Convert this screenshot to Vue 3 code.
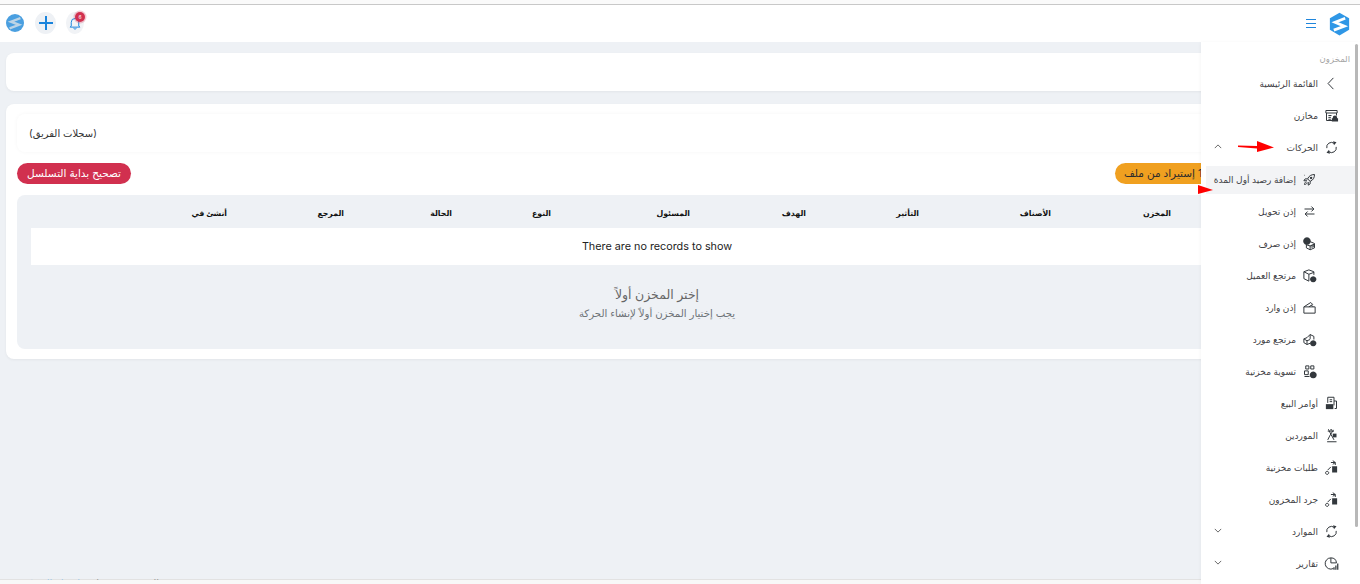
<script setup>
// أيقونات القائمة: line = خطوط، solid = أجزاء معبأة
const icons = {
  back: { line: ['M15 3 6.500 12 15 21'] },
  store: {
    line: ['M3 4h18v4H3z', 'M4 8v12h9', 'M20 8v4', 'M7 12h5M7 15h4M7 18h4'],
    solid: ['M14 15.500a3.500 3.500 0 0 1 7 0v1h1.500v5H12.500v-5H14z']
  },
  sync: {
    line: ['M4.500 13A7.500 7.500 0 0 1 16.500 5.500', 'M19.500 11A7.500 7.500 0 0 1 7.500 18.500'],
    solid: ['M14.500 2 20 3.500 16 8.500z', 'M9.500 22 4 20.500 8 15.500z']
  },
  rocket: {
    line: ['M9 11c2-5 6-7 11-7 0 5-2 9-7 11z', 'M9 11H5l-2 3h5', 'M13 15v4l-3 2v-5', 'M7 16c-2 0-3 2-3 4 2 0 4-1 4-3'],
    solid: ['M14.500 7.500a2 2 0 1 0 .1 0z', 'M3 4l2 1-1 1z']
  },
  swap: {
    line: ['M4 8h15', 'M15 4l4 4-4 4', 'M20 16H5', 'M9 12l-4 4 4 4']
  },
  out: {
    line: ['M13 9l7 3v7l-7 3-6-3v-6', 'M13 15v7', 'M7 14l6 2 7-3', 'M16 14v5M18 13v5'],
    solid: ['M8 2a6 6 0 1 1-.1 0z']
  },
  ret: {
    line: ['M11 3l8 3v5', 'M11 3 3 6v11l8 4', 'M3 6l8 4 8-3', 'M11 10v11'],
    solid: ['M18 13a5 5 0 1 1-.1 0z']
  },
  inbound: {
    line: ['M3 11h18v10H3z', 'M3 11l11-7 3 3-6 4', 'M15 8l3 3']
  },
  ret2: {
    line: ['M8 9 3 11v6l5 3 5-2', 'M8 9l5-5 6 3v5', 'M8 14v6', 'M3 11l5 3 5-2', 'M13 4v7'],
    solid: ['M18 13a5 5 0 1 1-.1 0z']
  },
  adjust: {
    line: ['M6 3h5v5H6z', 'M14 3h5v5h-5z', 'M4 11h6v6H4z', 'M4 20h8'],
    solid: ['M18 12a5.500 5.500 0 1 1-.1 0z']
  },
  sales: {
    line: ['M6 2h10v13', 'M6 2v9', 'M9 6h4M9 9h4', 'M16 8h4v12h-3'],
    solid: ['M3 13h12v8H3z']
  },
  suppliers: {
    line: ['M5 22h15', 'M6 5h10', 'M7 2l4 8 5 9', 'M15 3 9 13l-3 6'],
    solid: ['M14 9h6v6h-6z', 'M10 2h3v2h-3z']
  },
  requests: {
    line: ['M5 18a2.500 2.500 0 1 0 .1 0z', 'M6 16l5-5', 'M11 4h7v4', 'M14 1l4 3-4 3'],
    solid: ['M13 10h8v10h-8z']
  },
  clock: {
    line: ['M11 3a9 9 0 1 0 4 17', 'M11 3v8h9a9 9 0 0 0-9-8'],
    solid: ['M15 18h2v4h-2zM18 15h2v7h-2zM21 12h2v10h-2z']
  }
}

const items = [
  { label: 'القائمة الرئيسية', icon: 'back' },
  { label: 'مخازن', icon: 'store' },
  { label: 'الحركات', icon: 'sync', chevron: 'up' },
  { label: 'إضافة رصيد أول المدة', icon: 'rocket', sub: true, active: true },
  { label: 'إذن تحويل', icon: 'swap', sub: true },
  { label: 'إذن صرف', icon: 'out', sub: true },
  { label: 'مرتجع العميل', icon: 'ret', sub: true },
  { label: 'إذن وارد', icon: 'inbound', sub: true },
  { label: 'مرتجع مورد', icon: 'ret2', sub: true },
  { label: 'تسوية مخزنية', icon: 'adjust', sub: true },
  { label: 'أوامر البيع', icon: 'sales' },
  { label: 'الموردين', icon: 'suppliers' },
  { label: 'طلبات مخزنية', icon: 'requests' },
  { label: 'جرد المخزون', icon: 'requests' },
  { label: 'الموارد', icon: 'sync', chevron: 'down' },
  { label: 'تقارير', icon: 'clock', chevron: 'down' }
]

const columns = ['المخزن', 'الأصناف', 'التأثير', 'الهدف', 'المسئول', 'النوع', 'الحالة', 'المرجع', 'أنشئ في']
</script>

<template>
  <div class="page">
    <div class="top-line"></div>

    <header class="topbar">
      <div class="top-left">
        <svg class="round-logo" viewBox="0 0 20 20">
          <circle cx="10" cy="10" r="10" fill="#4a9fe0" />
          <path d="M16 4.500 5.500 8.500l9 3.500L4 16" fill="none" stroke="#bcd4e6" stroke-width="2.600" />
        </svg>
        <button class="plus-btn">
          <svg viewBox="0 0 14 14" width="14" height="14">
            <path d="M7 0v14M0 7h14" stroke="#1a84dc" stroke-width="2" />
          </svg>
        </button>
        <div class="bell">
          <svg viewBox="0 0 16 18" width="12" height="14">
            <path d="M3 13V8a5 5 0 0 1 10 0v5l1.500 1.500h-13zM6 16c.5 1.300 3.500 1.300 4 0" fill="none" stroke="#1a84dc" stroke-width="1.300" />
          </svg>
          <span class="badge">6</span>
        </div>
      </div>
      <div class="top-right">
        <div class="burger"><i></i><i></i><i></i></div>
        <svg class="hex-logo" viewBox="0 0 24 26">
          <path d="M12 0 23 6.500v13L12 26 1 19.500v-13z" fill="#2f97e6" />
          <path d="M18.500 6.500 7 11l10.500 4.500L5.500 20" fill="none" stroke="#fff" stroke-width="3.200" />
        </svg>
      </div>
    </header>

    <main class="content">
      <section class="card empty-card"></section>

      <section class="card main-card">
        <div class="title-box">(سجلات الفريق)</div>

        <div class="actions">
          <button class="pill orange">1 إستيراد من ملف</button>
          <button class="pill red">تصحيح بداية التسلسل</button>
        </div>

        <div class="table-box">
          <div class="table-head">
            <span v-for="c in columns" :key="c">{{ c }}</span>
          </div>
          <div class="no-records">There are no records to show</div>
          <div class="empty-state">
            <h2>إختر المخزن أولاً</h2>
            <p>يجب إختيار المخزن أولاً لإنشاء الحركة</p>
          </div>
        </div>
      </section>
    </main>

    <footer class="foot">
      <div class="foot-text"><span class="muted">جميع الحقوق محفوظة</span> <span class="link">بواسطة الشركة</span></div>
    </footer>

    <aside class="sidebar">
      <div class="side-title">المخزون</div>
      <nav>
        <a
          v-for="item in items"
          :key="item.label"
          class="side-row"
          :class="{ sub: item.sub, active: item.active }"
        >
          <svg class="ico" viewBox="0 0 24 24">
            <path v-for="d in icons[item.icon].line" :key="d" :d="d" fill="none" stroke="#33383d" stroke-width="1.600" />
            <path v-for="d in icons[item.icon].solid" :key="d" :d="d" fill="#33383d" />
          </svg>
          <span class="side-label">{{ item.label }}</span>
          <svg v-if="item.chevron" class="chev" viewBox="0 0 10 6" :class="{ up: item.chevron === 'up' }">
            <path d="M1 1l4 4 4-4" fill="none" stroke="#555" stroke-width="1.100" />
          </svg>
        </a>
      </nav>
      <div class="scroll-thumb"></div>
    </aside>

    <!-- الأسهم الحمراء فوق الصورة -->
    <svg class="arrow arrow-one" viewBox="0 0 36 12" width="36" height="12">
      <path d="M0 4.500 19 5V0l17 6.500L19 11V7.500L0 6z" fill="#f00" />
    </svg>
    <svg class="arrow arrow-two" viewBox="0 0 16 9" width="16" height="9">
      <path d="M1 0l15 5-15 4z" fill="#f00" />
    </svg>
  </div>
</template>

<style scoped>
.page {
  position: relative;
  width: 1360px;
  height: 584px;
  overflow: hidden;
  display: flex;
  flex-direction: column;
  background: #eef1f5;
  font-family: Inter, "Noto Sans", "DejaVu Sans", sans-serif;
  color: #333;
}
.top-line {
  height: 4px;
  background: #fafafa;
  border-bottom: 1px solid #c8c8c8;
}
.topbar {
  height: 37px;
  box-sizing: border-box;
  flex: none;
  display: flex;
  justify-content: space-between;
  align-items: center;
  background: #fff;
  padding: 0 10px 1px 6px;
}
.top-left, .top-right { display: flex; align-items: center; }
.round-logo { width: 18px; height: 18px; }
.plus-btn {
  width: 21px;
  height: 22px;
  margin-left: 11px;
  border: none;
  padding: 0;
  border-radius: 50%;
  background: #eef1f5;
  display: flex;
  align-items: center;
  justify-content: center;
}
.bell {
  position: relative;
  width: 18px;
  height: 22px;
  margin-left: 10px;
  border-radius: 50%;
  background: #f1f3f6;
  display: flex;
  align-items: center;
  justify-content: center;
}
.badge {
  position: absolute;
  top: 0;
  right: -1px;
  width: 10px;
  height: 10px;
  border-radius: 50%;
  background: #d1304f;
  box-shadow: 0 0 0 1.500px rgba(209, 48, 79, .25);
  color: #fff;
  font-size: 5px;
  line-height: 10px;
  text-align: center;
}
.burger { display: flex; flex-direction: column; gap: 3px; margin-right: 13px; }
.burger i { display: block; width: 10px; height: 1px; background: #1f86dc; }
.hex-logo { width: 21px; height: 24px; margin-top: 2px; }

.content {
  flex: 1;
  display: flex;
  flex-direction: column;
  gap: 13px;
  padding: 11px 52px 0 6px;
}
.card {
  background: #fff;
  border-radius: 8px;
  box-shadow: 0 1px 3px rgba(0, 0, 0, .05);
}
.empty-card { height: 38px; }
.main-card {
  height: 255px;
  padding: 10px 11px;
  box-sizing: border-box;
}
.title-box {
  height: 38px;
  box-sizing: border-box;
  border-radius: 8px;
  box-shadow: 0 0 4px rgba(0, 0, 0, .04);
  direction: rtl;
  text-align: left;
  padding-left: 12px;
  line-height: 39px;
  font-size: 10px;
  color: #333;
}
.actions {
  display: flex;
  justify-content: space-between;
  margin: 11px 0 11px;
  padding-right: 60px;
  flex-direction: row-reverse;
}
.pill {
  height: 21px;
  border: none;
  border-radius: 11px;
  font-family: inherit;
  font-size: 10.500px;
  direction: rtl;
  white-space: nowrap;
  padding: 0;
}
.pill.orange { background: #f0a020; color: #2c2c2c; width: 122px; text-align: left; padding-left: 9px; }
.pill.red { background: #d1304f; color: #fff; width: 114px; }

.table-box {
  height: 154px;
  border-radius: 8px;
  background: #eef1f5;
  padding: 0 14px;
}
.table-head {
  height: 33px;
  display: grid;
  direction: rtl;
  grid-template-columns: 120px 132px 113px 116px 139px 99px 108px 117px 1fr;
  padding-right: 112px;
  align-items: center;
  font-size: 7.800px;
  font-weight: 700;
  color: #111;
  padding-top: 2px;
  box-sizing: border-box;
}
.no-records {
  height: 37px;
  line-height: 37px;
  text-align: center;
  background: #fff;
  font-size: 10.800px;
  color: #222;
}
.empty-state { text-align: center; direction: rtl; color: #666; padding-top: 22px; }
.empty-state h2 { margin: 0; font-size: 12.500px; font-weight: 400; line-height: 16px; }
.empty-state p { margin: 4px 0 0; font-size: 10.200px; line-height: 13px; color: #6d7277; }

.foot {
  height: 4px;
  flex: none;
  border-top: 1px solid #e2e2e2;
  background: #f8f8f8;
  position: relative;
}
.foot-text {
  position: absolute;
  left: 22px;
  bottom: 4px;
  height: 4px;
  overflow: hidden;
  font-size: 10px;
  line-height: 14px;
  direction: rtl;
  white-space: nowrap;
}
.muted { color: #999; }
.link { color: #9cc8ea; }

.sidebar {
  position: absolute;
  top: 42px;
  right: 0;
  bottom: 0;
  width: 159px;
  background: #fff;
  direction: rtl;
  box-shadow: -1px 0 3px rgba(0, 0, 0, .03);
}
.side-title {
  height: 25px;
  padding: 11px 10px 0 0;
  box-sizing: border-box;
  font-size: 8.500px;
  line-height: 12px;
  color: #a5a5a5;
}
.side-row {
  position: relative;
  height: 32px;
  display: flex;
  align-items: center;
  gap: 6px;
  padding-right: 16px;
  margin-left: 5px;
  margin-right: 5px;
  font-size: 9px;
  color: #3f4246;
}
.side-row.sub { padding-right: 38px; }
.side-row.active::before {
  content: "";
  position: absolute;
  inset: 3px 0 1px;
  background: #f3f4f6;
}
.ico { position: relative; width: 15px; height: 15px; flex: none; }
.side-label { position: relative; white-space: nowrap; }
.chev {
  position: absolute;
  left: 8px;
  top: 13px;
  width: 8px;
  height: 5px;
}
.chev.up { transform: rotate(180deg); }
.scroll-thumb {
  position: absolute;
  top: 2px;
  right: 2px;
  width: 3px;
  height: 483px;
  background: #b8b8b8;
  border-radius: 2px;
}
.arrow { position: absolute; }
.arrow-one { left: 1238px; top: 141px; }
.arrow-two { left: 1197px; top: 185px; }
</style>
